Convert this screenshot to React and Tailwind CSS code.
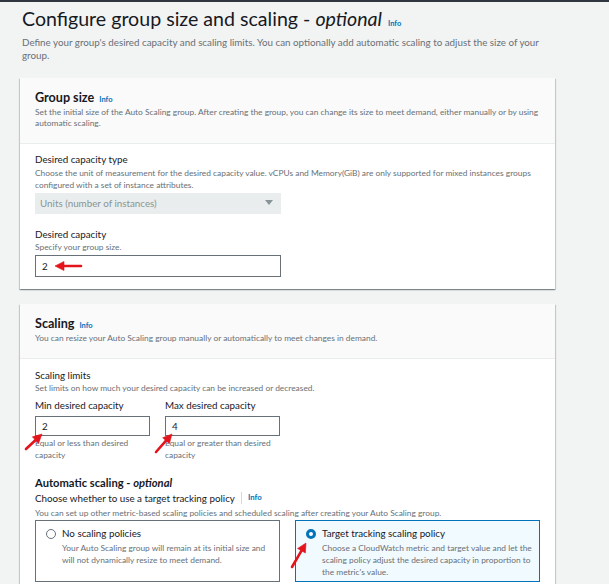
import React from "react"

const Info = ({ className = "" }) => (
	<span className={`text-[7.5px] leading-none font-bold text-[#0073bb] ${className}`}>Info</span>
)

// red annotation arrows, page coordinates
const arrows = [
	[81, 266, 55, 266],
	[26, 449, 42, 434],
	[156, 452, 172, 434],
	[292, 567, 306, 543],
]

const Arrow = ({ x1, y1, x2, y2 }) => {
	const dx = x2 - x1
	const dy = y2 - y1
	const len = Math.hypot(dx, dy)
	const ux = dx / len
	const uy = dy / len
	const hl = 9
	const hw = 4.5
	const bx = x2 - ux * hl
	const by = y2 - uy * hl
	const px = -uy
	const py = ux
	return (
		<g fill="#e3141b" stroke="#e3141b">
			<line x1={x1} y1={y1} x2={bx + ux} y2={by + uy} strokeWidth="2.6" strokeLinecap="round" />
			<polygon
				points={`${x2},${y2} ${bx + px * hw},${by + py * hw} ${bx - px * hw},${by - py * hw}`}
				strokeWidth="0.6"
				strokeLinejoin="round"
			/>
		</g>
	)
}

const Panel = ({ title, children, desc }) => (
	<div className="ml-[20px] w-[535px] bg-white shadow-[0_1px_1px_0_rgba(0,28,36,0.3),1px_1px_1px_0_rgba(0,28,36,0.15),-1px_1px_1px_0_rgba(0,28,36,0.15)]">
		<div className="bg-[#fafafa] border-b border-[#eaeded] px-[15px] pt-[11px] pb-[13px]">
			<div className="h-[18px] leading-[18px] flex items-baseline">
				<span className="text-[12.6px] font-bold text-[#16191f]">{title}</span>
				<Info className="ml-[5px]" />
			</div>
			<p className="text-[8.4px] leading-[11.5px] text-[#687078]">{desc}</p>
		</div>
		{children}
	</div>
)

const App = () => {
	return (
		<div className="relative w-[609px] h-[584px] overflow-hidden bg-[#f2f3f3] font-['Lato',sans-serif]">
			<div className="h-[2px] bg-[#2f3640]" />

			{/* Page header */}
			<div className="pl-[22px] pt-[5px]">
				<h1 className="h-[24px] text-[19.6px] leading-[24px] text-[#16191f] flex items-baseline">
					<span>
						Configure group size and scaling - <i>optional</i>
					</span>
					<Info className="ml-[6px]" />
				</h1>
				<p className="mt-[4.5px] w-[525px] text-[9.8px] leading-[13px] text-[#687078]">
					Define your group's desired capacity and scaling limits. You can optionally add automatic
					scaling to adjust the size of your group.
				</p>
			</div>

			<div className="mt-[16px]">
				<Panel
					title="Group size"
					desc="Set the initial size of the Auto Scaling group. After creating the group, you can change its size to meet demand, either manually or by using automatic scaling."
				>
					<div className="px-[15px] pt-[9.5px] pb-[12px]">
						<div className="text-[9.8px] leading-[13px] text-[#16191f]">Desired capacity type</div>
						<p className="mt-[0.5px] text-[8.4px] leading-[12px] text-[#687078]">
							Choose the unit of measurement for the desired capacity value. vCPUs and Memory(GiB) are
							only supported for mixed instances groups configured with a set of instance attributes.
						</p>
						<div className="mt-[2px] w-[246px] h-[21px] bg-[#eaeded] flex items-center justify-between pl-[5px] pr-[8px]">
							<span className="text-[9.8px] text-[#879596]">Units (number of instances)</span>
							<svg width="8" height="6" viewBox="0 0 8 6">
								<polygon points="0,0 8,0 4,5" fill="#879596" />
							</svg>
						</div>

						<div className="mt-[14.5px] text-[9.8px] leading-[13px] text-[#16191f]">Desired capacity</div>
						<p className="text-[8.4px] leading-[12px] text-[#687078]">Specify your group size.</p>
						<div className="mt-[2px] w-[246px] h-[22px] border border-[#687078] bg-white flex items-center pl-[6px] text-[9.8px] text-[#16191f]">
							2
						</div>
					</div>
				</Panel>
			</div>

			<div className="mt-[15px]">
				<Panel
					title="Scaling"
					desc="You can resize your Auto Scaling group manually or automatically to meet changes in demand."
				>
					<div className="px-[15px] pt-[10.5px]">
						<div className="text-[9.8px] leading-[13px] text-[#16191f]">Scaling limits</div>
						<p className="text-[8.4px] leading-[12px] text-[#687078]">
							Set limits on how much your desired capacity can be increased or decreased.
						</p>

						<div className="mt-[4.5px] flex gap-[15px]">
							<div className="w-[115px]">
								<div className="text-[9.8px] leading-[13px] text-[#16191f]">Min desired capacity</div>
								<div className="mt-[4.5px] h-[20px] border border-[#687078] bg-white flex items-center pl-[6px] text-[9.8px] text-[#16191f]">
									2
								</div>
								<p className="mt-[1px] text-[8.4px] leading-[12px] text-[#687078]">
									Equal or less than desired capacity
								</p>
							</div>
							<div className="w-[115px]">
								<div className="text-[9.8px] leading-[13px] text-[#16191f]">Max desired capacity</div>
								<div className="mt-[4.5px] h-[20px] border border-[#687078] bg-white flex items-center pl-[6px] text-[9.8px] text-[#16191f]">
									4
								</div>
								<p className="mt-[1px] text-[8.4px] leading-[12px] text-[#687078]">
									Equal or greater than desired capacity
								</p>
							</div>
						</div>

						<div className="mt-[13.5px] text-[11.2px] leading-[15px] font-bold text-[#16191f]">
							Automatic scaling - <i>optional</i>
						</div>
						<div className="mt-[2px] h-[13px] flex items-center text-[9.8px] leading-[13px] text-[#16191f]">
							<span>Choose whether to use a target tracking policy</span>
							<span className="mx-[6px] h-[12px] w-px bg-[#d5dbdb]" />
							<Info className="text-[7.8px]" />
						</div>
						<p className="mt-[2.5px] text-[8.4px] leading-[12px] text-[#687078]">
							You can set up other metric-based scaling policies and scheduled scaling after creating
							your Auto Scaling group.
						</p>

						<div className="mt-[1px] grid grid-cols-2 gap-[15px]">
							<div className="h-[62px] border border-[#687078] bg-white flex pl-[10px] pr-[10px] pt-[6px]">
								<span className="mt-[1.5px] w-[10px] h-[10px] rounded-full border border-[#687078] shrink-0" />
								<div className="ml-[6px]">
									<div className="text-[9.8px] leading-[13px] text-[#16191f]">No scaling policies</div>
									<p className="mt-[2px] text-[8.4px] leading-[12px] text-[#687078]">
										Your Auto Scaling group will remain at its initial size and will not dynamically
										resize to meet demand.
									</p>
								</div>
							</div>
							<div className="h-[62px] border border-[#0073bb] bg-[#f1faff] flex pl-[10px] pr-[2px] pt-[6px]">
								<span className="mt-[1.5px] w-[10px] h-[10px] rounded-full border-[3px] border-[#0073bb] bg-white shrink-0" />
								<div className="ml-[6px]">
									<div className="text-[9.8px] leading-[13px] text-[#16191f]">
										Target tracking scaling policy
									</div>
									<p className="mt-[2px] text-[8.4px] leading-[12px] text-[#687078]">
										Choose a CloudWatch metric and target value and let the scaling policy adjust the
										desired capacity in proportion to the metric's value.
									</p>
								</div>
							</div>
						</div>
					</div>
					<div className="h-[20px]" />
				</Panel>
			</div>

			{/* annotation overlay */}
			<svg className="absolute inset-0 pointer-events-none" width="609" height="584">
				{arrows.map(([x1, y1, x2, y2], i) => (
					<Arrow key={i} x1={x1} y1={y1} x2={x2} y2={y2} />
				))}
			</svg>
		</div>
	)
}

export default App
